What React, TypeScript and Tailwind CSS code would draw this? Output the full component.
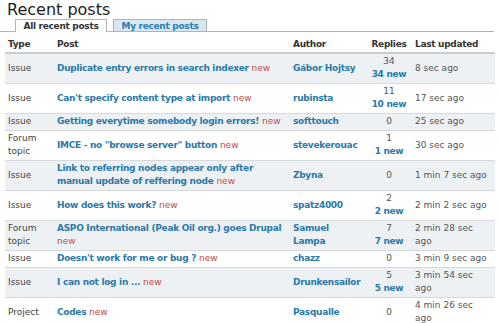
import React from 'react';

type Row = {
  type: string;
  title: string;
  author: string;
  replies: number;
  fresh?: number;
  updated: string;
};

const rows: Row[] = [
  { type: 'Issue', title: 'Duplicate entry errors in search indexer', author: 'Gábor Hojtsy', replies: 34, fresh: 34, updated: '8 sec ago' },
  { type: 'Issue', title: "Can't specify content type at import", author: 'rubinsta', replies: 11, fresh: 10, updated: '17 sec ago' },
  { type: 'Issue', title: 'Getting everytime somebody login errors!', author: 'softtouch', replies: 0, updated: '25 sec ago' },
  { type: 'Forum topic', title: 'IMCE - no "browse server" button', author: 'stevekerouac', replies: 1, fresh: 1, updated: '30 sec ago' },
  { type: 'Issue', title: 'Link to referring nodes appear only after manual update of reffering node', author: 'Zbyna', replies: 0, updated: '1 min 7 sec ago' },
  { type: 'Issue', title: 'How does this work?', author: 'spatz4000', replies: 2, fresh: 2, updated: '2 min 2 sec ago' },
  { type: 'Forum topic', title: 'ASPO International (Peak Oil org.) goes Drupal', author: 'Samuel Lampa', replies: 7, fresh: 7, updated: '2 min 28 sec ago' },
  { type: 'Issue', title: "Doesn't work for me or bug ?", author: 'chazz', replies: 0, updated: '3 min 9 sec ago' },
  { type: 'Issue', title: 'I can not log in ...', author: 'Drunkensailor', replies: 5, fresh: 5, updated: '3 min 54 sec ago' },
  { type: 'Project', title: 'Codes', author: 'Pasqualle', replies: 0, updated: '4 min 26 sec ago' },
];

export default function App() {
  return (
    <div className="w-[500px] h-[323px] overflow-hidden bg-white font-['DejaVu_Sans',sans-serif] text-[9px] text-[#444]">
      <h1 className="pl-[7px] text-[16px] leading-[19px] font-normal text-[#1d1d1d]">Recent posts</h1>

      {/* Tabs */}
      <div className="flex gap-[6px] w-[494px] h-[13px] pl-[15px] border-b border-[#aeb5ba]">
        <div className="w-[92px] h-[13px] flex items-center justify-center bg-white border border-b-0 border-[#aeb5ba] font-bold tracking-[-0.3px] text-[#333] leading-[12px]">
          All recent posts
        </div>
        <div className="w-[94px] h-[12px] flex items-center justify-center bg-[#d9e7f1] border border-b-0 border-[#aeb5ba] font-bold tracking-[-0.3px] text-[#2d7db3] leading-[12px]">
          My recent posts
        </div>
      </div>

      <table className="table-fixed w-[490px] ml-[5px] mt-[5px] leading-[13px]">
        <colgroup>
          <col className="w-[49px]" />
          <col className="w-[235px]" />
          <col className="w-[77px]" />
          <col className="w-[46px]" />
          <col className="w-[83px]" />
        </colgroup>
        <thead>
          <tr className="border-b-2 border-[#c9cdd0] text-[#333] font-bold tracking-[-0.3px] text-left">
            <th className="pl-[3px] py-[1px]">Type</th>
            <th className="pl-[3px] py-[1px]">Post</th>
            <th className="pl-[4px] py-[1px]">Author</th>
            <th className="py-[1px] text-center">Replies</th>
            <th className="pl-[3px] py-[1px]">Last updated</th>
          </tr>
        </thead>
        <tbody>
          {rows.map((r, i) => (
            <tr key={i} className={`border-b border-[#d6dadd] align-middle ${i % 2 === 0 ? 'bg-[#eef1f3]' : 'bg-white'}`}>
              <td className="pl-[3px] pr-[4px] pt-[1px] pb-[2px]">{r.type}</td>
              <td className="pl-[3px] pr-[2px] pt-[1px] pb-[2px]">
                <span className="font-bold tracking-[-0.3px] text-[#2a79a8]">{r.title}</span>{' '}
                <span className="text-[#c34a4a]">new</span>
              </td>
              <td className="pl-[4px] pr-[3px] pt-[1px] pb-[2px] font-bold tracking-[-0.3px] text-[#2a79a8]">{r.author}</td>
              <td className="pt-[1px] pb-[2px] text-center text-[#555]">
                <div>{r.replies}</div>
                {r.fresh !== undefined && (
                  <div className="font-bold tracking-[-0.3px] text-[#2a79a8]">{r.fresh} new</div>
                )}
              </td>
              <td className="pl-[3px] pr-[5px] pt-[1px] pb-[2px] text-[#555]">{r.updated}</td>
            </tr>
          ))}
        </tbody>
      </table>
    </div>
  );
}
